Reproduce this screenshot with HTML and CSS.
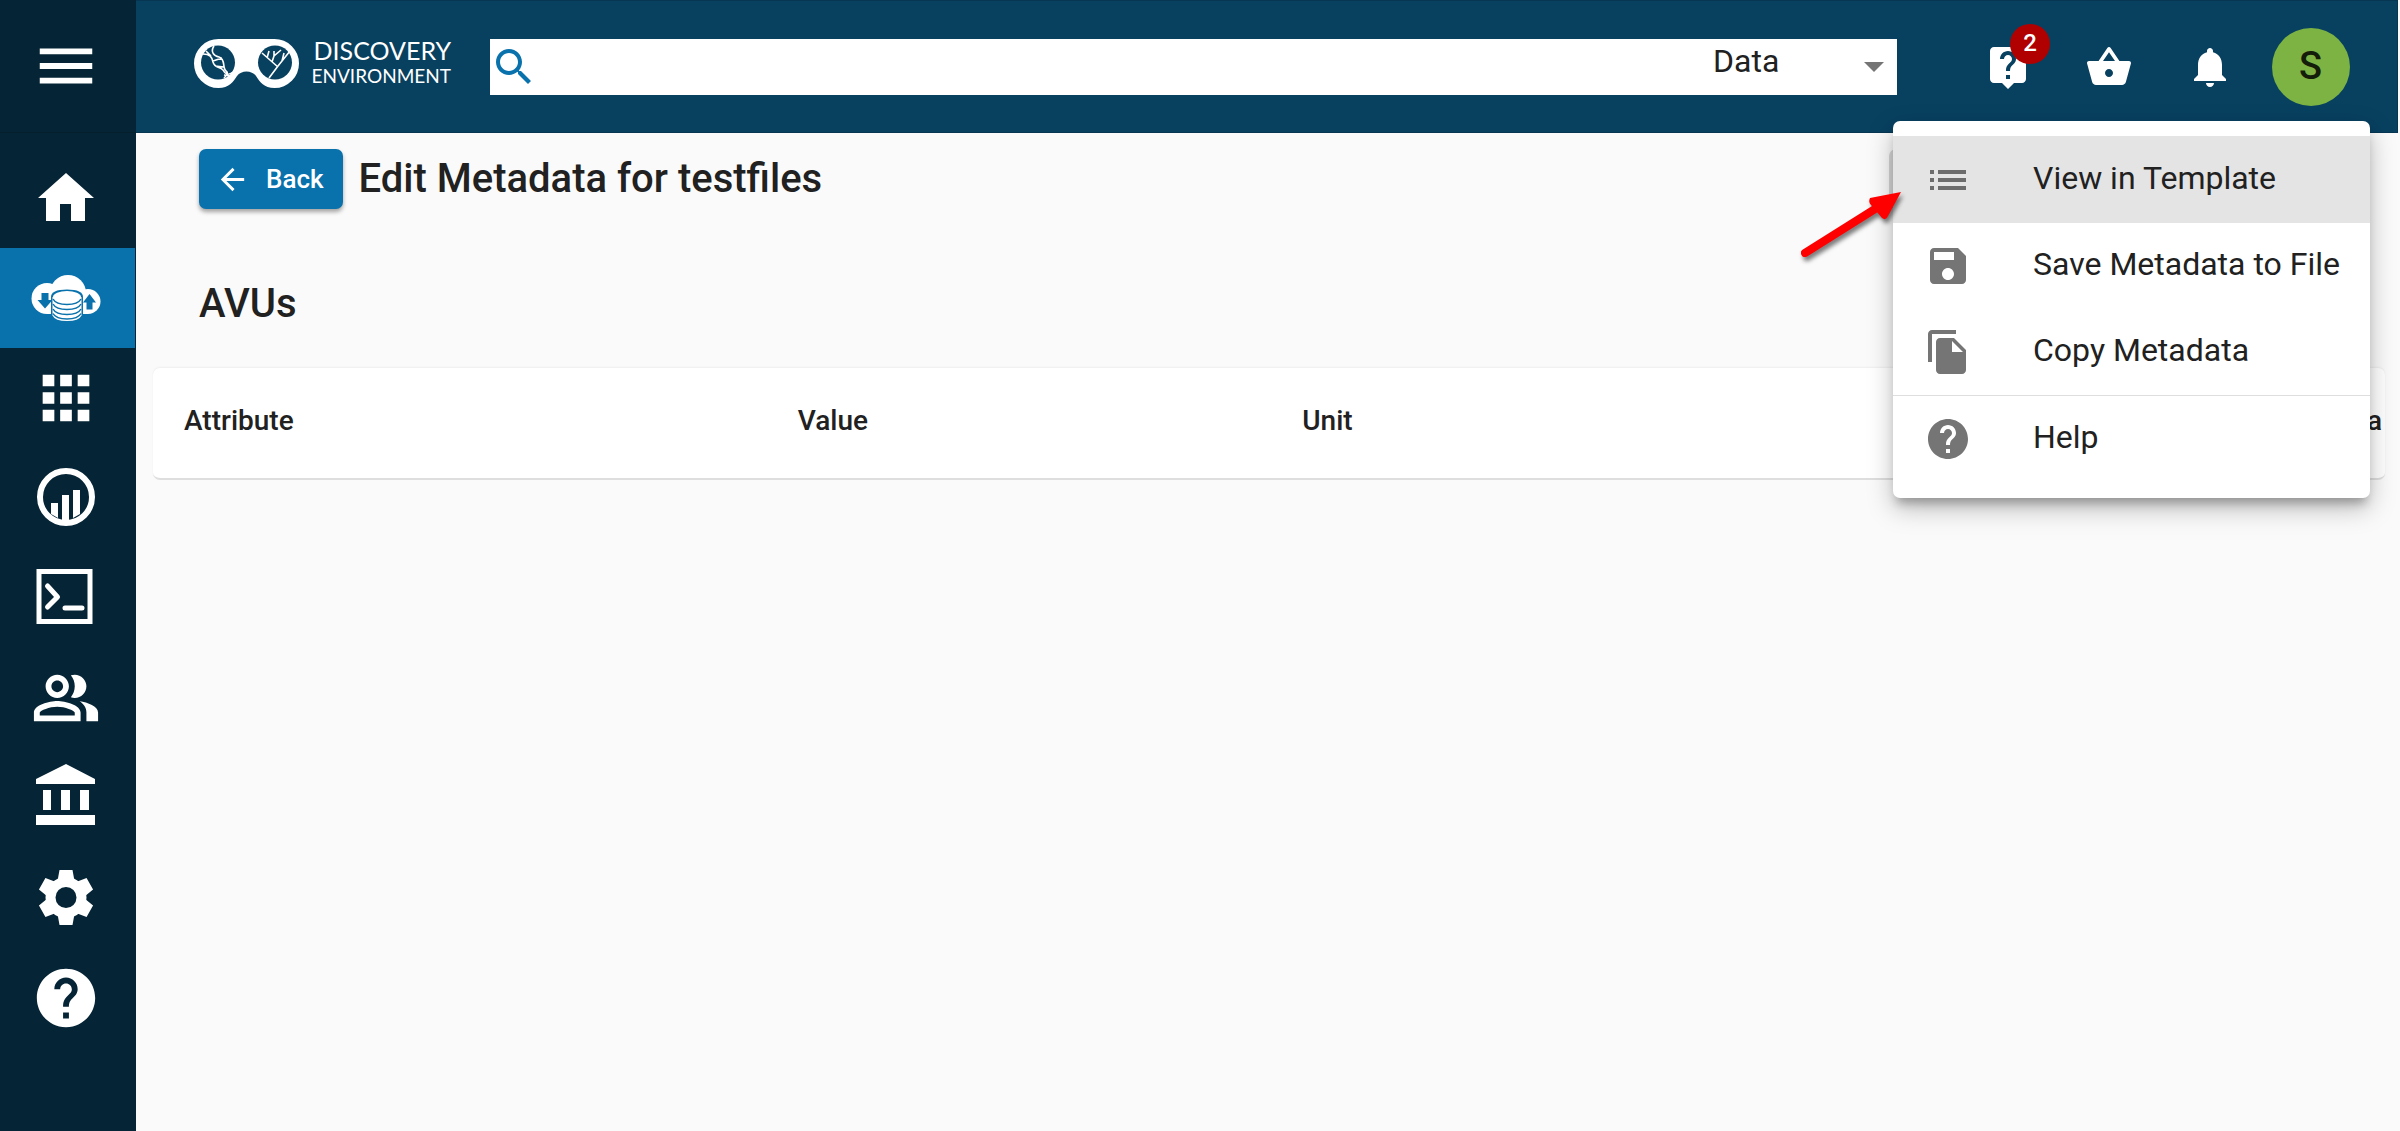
FILE: index.html
```html
<!DOCTYPE html>
<html lang="en">
<head>
  <meta charset="utf-8">
  <title>Discovery Environment</title>
  <link rel="stylesheet" href="styles.css">
</head>
<body>
  <div class="app">
    <aside class="sidebar">
      <button class="menu-toggle" type="button" aria-label="Toggle navigation">
        <svg class="nav-icon" viewBox="0 0 24 24"><path d="M3 18h18v-2H3v2zm0-5h18v-2H3v2zm0-7v2h18V6H3z"/></svg>
      </button>
      <nav class="nav">
        <a class="nav-link" href="#home" aria-label="Home">
          <svg class="nav-icon" viewBox="0 0 70 70"><path d="M29 58V41h11v17h14V35h9L35 10 7 35h8v23z"/></svg>
        </a>
        <a class="nav-link nav-link-active" href="#data" aria-label="Data">
          <svg class="nav-icon" viewBox="0 0 70 70">
            <circle cx="16" cy="35.500" r="15.500"/>
            <circle cx="37" cy="30" r="18"/>
            <circle cx="57" cy="38.500" r="12.500"/>
            <path d="M16 30h41v21H16z"/>
            <path class="cut" d="M10.500 30h7v7h4L14 45.500 6.500 37h4zM55.500 46.500h6v-7h3.500l-6.500-8.500-6.500 8.500h3.500z"/>
            <path class="cut" d="M20 34Q20 26.500 36 26.500T52 34V51H20Z"/>
            <path d="M21.500 34V52.500Q24 58 36 58T50.500 52.500V34Z"/>
            <ellipse cx="36" cy="34" rx="14" ry="6"/>
            <path class="cut-line" d="M22 36Q25 41.500 36 41.500T50 36M22 41Q25 46.500 36 46.500T50 41M22 46Q25 51.500 36 51.500T50 46M22 50.500Q25 56 36 56T50 50.500"/>
          </svg>
        </a>
        <a class="nav-link" href="#apps" aria-label="Apps">
          <svg class="nav-icon" viewBox="0 0 24 24"><path d="M4 8h4V4H4v4zm6 12h4v-4h-4v4zm-6 0h4v-4H4v4zm0-6h4v-4H4v4zm6 0h4v-4h-4v4zm6-10v4h4V4h-4zm-6 4h4V4h-4v4zm6 6h4v-4h-4v4zm0 6h4v-4h-4v4z"/></svg>
        </a>
        <a class="nav-link" href="#analyses" aria-label="Analyses">
          <svg class="nav-icon" viewBox="0 0 70 70">
            <circle class="ring" cx="35" cy="34" r="26"/>
            <path d="M20 40h7v15l-7-4zM31 32h7v27h-7zM42 27h7v24l-7 4z"/>
          </svg>
        </a>
        <a class="nav-link" href="#terminal" aria-label="Terminal">
          <svg class="nav-icon" viewBox="0 0 70 70">
            <rect class="frame" x="8" y="8.500" width="51" height="50"/>
            <path class="stroke" d="M16.500 23l10 11-10 10M34 45h17"/>
          </svg>
        </a>
        <a class="nav-link" href="#teams" aria-label="Teams">
          <svg class="nav-icon" viewBox="0 0 24 24"><path d="M16.670 13.130C18.040 14.060 19 15.320 19 17v3h4v-3c0-2.180-3.570-3.470-6.330-3.870zM15 12c2.210 0 4-1.790 4-4s-1.790-4-4-4c-.47 0-.91.1-1.330.24C14.500 5.270 15 6.580 15 8s-.5 2.730-1.330 3.760c.42.14.86.24 1.330.24zM9 12c2.210 0 4-1.790 4-4s-1.790-4-4-4-4 1.790-4 4 1.790 4 4 4zm0-6c1.100 0 2 .9 2 2s-.9 2-2 2-2-.9-2-2 .9-2 2-2zM9 13c-2.670 0-8 1.340-8 4v3h16v-3c0-2.660-5.330-4-8-4zm6 5H3v-.99C3.200 16.290 6.300 15 9 15s5.800 1.290 6 2v1z"/></svg>
        </a>
        <a class="nav-link" href="#collections" aria-label="Collections">
          <svg class="nav-icon" viewBox="0 0 70 70"><path d="M35 1L5 16v5h59v-5zM12 27h8v20h-8zM30 27h9v20h-9zM49 27h9v20h-9zM5 52h59v10H5z"/></svg>
        </a>
        <a class="nav-link" href="#settings" aria-label="Settings">
          <svg class="nav-icon" viewBox="0 0 70 70">
            <path id="teeth" d="M28.500 7h13l2 11h-17zM28.500 62h13l2-11h-17z"/>
            <use href="#teeth" transform="rotate(60 35 34.500)"/>
            <use href="#teeth" transform="rotate(120 35 34.500)"/>
            <circle class="gear-body" cx="35" cy="34.500" r="15.500"/>
          </svg>
        </a>
        <a class="nav-link" href="#help" aria-label="Help">
          <svg class="nav-icon" viewBox="0 0 24 24"><path d="M12 2C6.480 2 2 6.480 2 12s4.480 10 10 10 10-4.480 10-10S17.520 2 12 2zm1 17h-2v-2h2v2zm2.070-7.750l-.9.920C13.450 12.900 13 13.500 13 15h-2v-.5c0-1.100.45-2.100 1.170-2.830l1.240-1.260c.37-.36.59-.86.59-1.410 0-1.100-.9-2-2-2s-2 .9-2 2H8c0-2.210 1.790-4 4-4s4 1.790 4 4c0 .88-.36 1.680-.93 2.250z"/></svg>
        </a>
      </nav>
    </aside>

    <div class="page">
      <header class="topbar">
        <a class="brand" href="#home">
          <svg class="brand-mark" viewBox="0 0 105 50" aria-hidden="true">
            <path d="M24.500 0H80.500A24.500 24.500 0 0 1 80.500 49C70 49 66 43 62 37C58 31 47 31 43 37C39 43 35 49 24.500 49A24.500 24.500 0 0 1 24.500 0Z"/>
            <circle class="lens" cx="24" cy="23.500" r="17"/>
            <circle class="lens" cx="81" cy="23.500" r="17"/>
            <path class="etch" d="M9 15C16 15 18 18 19 23C21 30 26 27 29 31C31 35 34 37 39 33M20 7C16 13 20 17 25 18C32 20 28 29 32 32C35 34 32 37 30 39M12 12l5 5M19 22l9-3M21 27l9 1M30 36l6 1"/>
            <path class="etch" d="M75 39L84 27L96 12M68 14L84 28M73 19L75 12M78 23L80 17L87 11M80 17L80 12M88 22L90 14"/>
          </svg>
          <span class="brand-name">
            <span class="brand-top">DISCOVERY</span>
            <span class="brand-bottom">ENVIRONMENT</span>
          </span>
        </a>
        <form class="search" role="search">
          <svg class="icon search-icon" viewBox="0 0 24 24" aria-hidden="true"><path d="M15.500 14h-.79l-.28-.27C15.410 12.590 16 11.110 16 9.500 16 5.910 13.090 3 9.500 3S3 5.910 3 9.500 5.910 16 9.500 16c1.610 0 3.090-.59 4.230-1.570l.27.28v.79l5 4.990L20.490 19l-4.990-5zm-6 0C7.010 14 5 11.990 5 9.500S7.010 5 9.500 5 14 7.010 14 9.500 11.990 14 9.500 14z"/></svg>
          <input class="search-input" type="text" aria-label="Search">
          <div class="scope">
            <select class="scope-select" aria-label="Search in">
              <option>Data</option>
              <option>Apps</option>
            </select>
            <svg class="scope-arrow" viewBox="0 0 20 10" aria-hidden="true"><path d="M0 0h20L10 10z"/></svg>
          </div>
        </form>
        <div class="actions">
          <button class="action" type="button" aria-label="Support, 2 new">
            <svg class="icon" viewBox="0 0 24 24"><path d="M19 2H5c-1.110 0-2 .9-2 2v14c0 1.100.89 2 2 2h4l3 3 3-3h4c1.100 0 2-.9 2-2V4c0-1.100-.9-2-2-2zm-6 16h-2v-2h2v2zm2.070-7.750l-.9.920C13.450 11.900 13 12.500 13 14h-2v-.5c0-1.100.45-2.100 1.170-2.830l1.240-1.260c.37-.36.59-.86.59-1.410 0-1.100-.9-2-2-2s-2 .9-2 2H8c0-2.210 1.790-4 4-4s4 1.790 4 4c0 .88-.36 1.680-.93 2.250z"/></svg>
            <span class="badge">2</span>
          </button>
          <button class="action" type="button" aria-label="Bag">
            <svg class="icon" viewBox="0 0 24 24"><path d="M17.210 9l-4.380-6.560c-.19-.28-.51-.42-.83-.42-.32 0-.64.14-.83.43L6.790 9H2c-.55 0-1 .45-1 1 0 .09.01.18.04.27l2.540 9.270c.23.84 1 1.460 1.920 1.460h13c.92 0 1.690-.62 1.930-1.460l2.540-9.270L23 10c0-.55-.45-1-1-1h-4.790zM9 9l3-4.400L15 9H9zm3 8c-1.100 0-2-.9-2-2s.9-2 2-2 2 .9 2 2-.9 2-2 2z"/></svg>
          </button>
          <button class="action" type="button" aria-label="Notifications">
            <svg class="icon" viewBox="0 0 24 24"><path d="M12 22c1.100 0 2-.9 2-2h-4c0 1.100.89 2 2 2zm6-6v-5c0-3.070-1.640-5.640-4.500-6.320V4c0-.83-.67-1.500-1.500-1.500s-1.500.67-1.500 1.500v.68C7.630 5.360 6 7.920 6 11v5l-2 2v1h16v-1l-2-2z"/></svg>
          </button>
          <button class="action" type="button" aria-label="Account"><span class="avatar">S</span></button>
        </div>
      </header>

      <main class="content">
        <div class="heading">
          <button class="back" type="button">
            <svg class="back-icon" viewBox="0 0 24 24" aria-hidden="true"><path d="M20 11H7.830l5.590-5.590L12 4l-8 8 8 8 1.410-1.410L7.830 13H20v-2z"/></svg>
            Back
          </button>
          <h1 class="title">Edit Metadata for testfiles</h1>
          <button class="more" type="button" aria-label="More actions"></button>
        </div>
        <h2 class="section-title">AVUs</h2>
        <table class="avus">
          <thead>
            <tr>
              <th class="col-attribute">Attribute</th>
              <th class="col-value">Value</th>
              <th>Unit</th>
              <th class="col-last">Metadata</th>
            </tr>
          </thead>
        </table>
      </main>
    </div>

    <div class="menu" role="menu">
      <button class="menu-item menu-item-active" type="button" role="menuitem">
        <svg class="icon" viewBox="0 0 24 24"><path d="M3 13h2v-2H3v2zm0 4h2v-2H3v2zm0-8h2V7H3v2zm4 4h14v-2H7v2zm0 4h14v-2H7v2zM7 7v2h14V7H7z"/></svg>
        <span class="menu-label">View in Template</span>
      </button>
      <button class="menu-item" type="button" role="menuitem">
        <svg class="icon" viewBox="0 0 24 24"><path d="M17 3H5c-1.110 0-2 .9-2 2v14c0 1.100.89 2 2 2h14c1.100 0 2-.9 2-2V7l-4-4zm-5 16c-1.660 0-3-1.340-3-3s1.340-3 3-3 3 1.340 3 3-1.340 3-3 3zm3-10H5V5h10v4z"/></svg>
        <span class="menu-label">Save Metadata to File</span>
      </button>
      <button class="menu-item" type="button" role="menuitem">
        <svg class="icon" viewBox="0 0 24 24"><path d="M16 1H4c-1.100 0-2 .9-2 2v14h2V3h12V1zm-1 4l6 6v10c0 1.100-.9 2-2 2H7.990C6.890 23 6 22.100 6 21V7c0-1.100.89-2 1.990-2h7zm-1 7h5.500L14 6.500V12z"/></svg>
        <span class="menu-label">Copy Metadata</span>
      </button>
      <hr class="menu-divider">
      <button class="menu-item" type="button" role="menuitem">
        <svg class="icon" viewBox="0 0 24 24"><path d="M12 2C6.480 2 2 6.480 2 12s4.480 10 10 10 10-4.480 10-10S17.520 2 12 2zm1 17h-2v-2h2v2zm2.070-7.750l-.9.920C13.450 12.900 13 13.500 13 15h-2v-.5c0-1.100.45-2.100 1.170-2.830l1.240-1.260c.37-.36.59-.86.59-1.410 0-1.100-.9-2-2-2s-2 .9-2 2H8c0-2.210 1.790-4 4-4s4 1.790 4 4c0 .88-.36 1.680-.93 2.250z"/></svg>
        <span class="menu-label">Help</span>
      </button>
      <svg class="pointer" viewBox="0 0 120 80" aria-hidden="true">
        <path class="pointer-line" d="M14 67L84 23"/>
        <path d="M110 6L79 12Q77 16 80 19L91 32Q95 35 97 30Z"/>
      </svg>
    </div>
  </div>
</body>
</html>
```
FILE: styles.css
```css
* {
  box-sizing: border-box;
}

body {
  margin: 0;
  background: #fafafa;
  color: #212121;
  font-family: Roboto, "Liberation Sans", sans-serif;
  font-size: 32px;
}

button,
input,
select {
  margin: 0;
  padding: 0;
  border: 0;
  background: none;
  color: inherit;
  font: inherit;
}

svg {
  display: block;
  flex: none;
  fill: currentColor;
}

.app {
  position: relative;
  display: flex;
  min-height: 100vh;
}

.icon {
  width: 48px;
  height: 48px;
}

/* Navigation rail */
.sidebar {
  flex: none;
  width: 136px;
  background: #052435;
  color: #fff;
}

.menu-toggle {
  display: flex;
  align-items: center;
  width: 100%;
  height: 133px;
  padding-left: 31px;
  border-bottom: 1px solid #04202c;
}

.nav {
  padding-top: 15px;
}

.nav-link {
  display: flex;
  align-items: center;
  height: 100px;
  margin-right: 1px;
  padding-left: 31px;
  color: #fff;
}

.nav-link-active {
  background: #0971ab;
}

.nav-icon {
  width: 70px;
  height: 70px;
}

.cut {
  fill: #0971ab;
}

.cut-line {
  fill: none;
  stroke: #0971ab;
  stroke-width: 1.5;
}

.ring,
.frame,
.stroke {
  fill: none;
  stroke: #fff;
  stroke-width: 6;
}

.frame {
  stroke-width: 5;
}

.stroke {
  stroke-width: 5;
  stroke-linecap: round;
  stroke-linejoin: round;
}

.gear-body {
  fill: none;
  stroke: #fff;
  stroke-width: 10;
}

/* Top bar */
.page {
  flex: 1;
  min-width: 0;
}

.topbar {
  display: flex;
  align-items: center;
  height: 133px;
  margin-right: 2px;
  padding: 0 36px 0 58px;
  border: solid #063652;
  border-width: 1px 1px 1px 0;
  background: #084060;
  color: #fff;
}

.brand {
  display: flex;
  align-items: center;
  justify-content: space-between;
  width: 257px;
  margin-right: 39px;
  padding-bottom: 6px;
  color: #fff;
  text-decoration: none;
}

.brand-mark {
  width: 105px;
  height: 50px;
}

.lens {
  fill: #084060;
}

.etch {
  fill: none;
  stroke: #fff;
  stroke-width: 1.6;
}

.brand-name {
  display: flex;
  flex-direction: column;
  align-items: flex-end;
  padding-bottom: 4px;
  font-family: Lato, sans-serif;
}

.brand-top {
  font-size: 25px;
  line-height: 28px;
}

.brand-bottom {
  font-size: 19px;
  line-height: 24px;
}

.search {
  display: flex;
  flex: 1;
  align-items: center;
  height: 56px;
  margin-right: 60px;
  background: #fff;
  color: #212121;
}

.search-icon {
  color: #0971ab;
}

.search-input {
  flex: 1;
  min-width: 0;
  height: 56px;
}

.scope {
  display: flex;
  align-items: center;
  width: 184px;
  padding-right: 13px;
}

.scope-select {
  flex: 1;
  height: 56px;
  padding-bottom: 12px;
  appearance: none;
}

.scope-arrow {
  width: 20px;
  height: 10px;
  color: #757575;
}

.actions {
  display: flex;
}

.action {
  position: relative;
  display: flex;
  align-items: center;
  justify-content: center;
  width: 101px;
  height: 78px;
}

.badge {
  position: absolute;
  top: -4px;
  right: 8px;
  width: 40px;
  height: 40px;
  border-radius: 50%;
  background: #b00000;
  font-size: 24px;
  font-weight: 500;
  line-height: 38px;
}

.avatar {
  width: 78px;
  height: 78px;
  border-radius: 50%;
  background: #7cb342;
  color: #141c0a;
  font-size: 38px;
  font-weight: 500;
  line-height: 76px;
}

/* Metadata page */
.content {
  padding: 16px 15px 0 17px;
}

.heading {
  display: flex;
  align-items: center;
  padding: 0 13px 0 46px;
}

.back {
  display: flex;
  align-items: center;
  gap: 16px;
  height: 60px;
  padding: 0 19px 0 16px;
  border-radius: 7px;
  background: #0971ab;
  box-shadow: 0 3px 4px rgba(0, 0, 0, 0.35);
  color: #fff;
  font-size: 26px;
  font-weight: 500;
}

.back-icon {
  width: 35px;
  height: 35px;
}

.title,
.section-title {
  margin: 0;
  font-size: 40px;
  font-weight: 500;
  line-height: 46px;
}

.title {
  flex: 1;
  padding-left: 16px;
}

.more {
  width: 483px;
  height: 60px;
  border-radius: 7px 0 0 7px;
  background: linear-gradient(90deg, #d5d5d5 50%, transparent 50%);
}

.section-title {
  margin: 72px 0 41px;
  padding-left: 46px;
}

.avus {
  width: 100%;
  height: 112px;
  border-bottom: 2px solid #dedede;
  border-collapse: separate;
  border-spacing: 0;
  border-radius: 7px;
  background: #fff;
  box-shadow: 0 -1px 2px rgba(0, 0, 0, 0.05);
  font-size: 28px;
  line-height: 32px;
}

.avus th {
  padding: 0 3px 4px 31px;
  font-weight: 500;
  text-align: left;
}

.avus .col-attribute {
  width: 27.5%;
}

.avus .col-value {
  width: 22.6%;
}

.avus .col-last {
  text-align: right;
}

/* Actions menu */
.menu {
  position: absolute;
  top: 121px;
  right: 30px;
  width: 477px;
  padding: 15px 0 16px;
  border-radius: 7px;
  background: #fff;
  box-shadow: 0 9px 10px -4px rgba(0, 0, 0, 0.25), 0 10px 26px rgba(0, 0, 0, 0.26);
}

.menu-item {
  display: flex;
  align-items: center;
  gap: 61px;
  width: 100%;
  height: 86px;
  padding-left: 31px;
  white-space: nowrap;
}

.menu-item .icon {
  color: #757575;
}

.menu-label {
  padding-bottom: 4px;
}

.menu-item-active {
  height: 87px;
  background: #e4e4e4;
}

.menu-item-active .icon {
  color: #6c6c6c;
}

.menu-divider {
  height: 1px;
  margin: 0;
  border: 0;
  background: #dedede;
}

.pointer {
  position: absolute;
  top: 65px;
  left: -102px;
  width: 120px;
  height: 80px;
  color: #f00;
  filter: drop-shadow(2px 4px 2px rgba(0, 0, 0, 0.5));
}

.pointer-line {
  fill: none;
  stroke: #f00;
  stroke-width: 8;
  stroke-linecap: round;
}
```
